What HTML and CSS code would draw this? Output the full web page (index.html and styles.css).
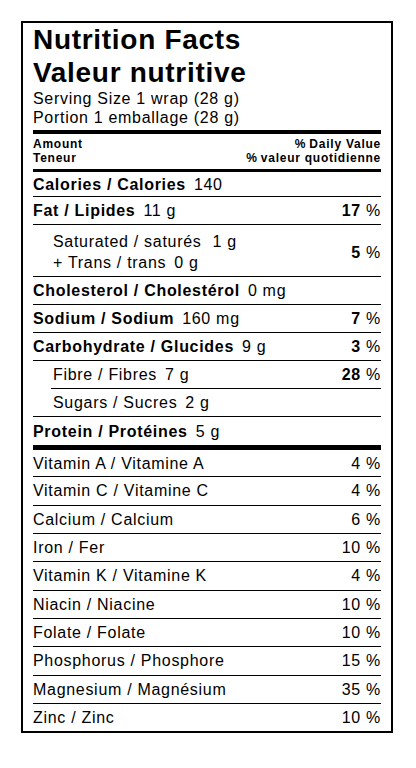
FILE: index.html
```html
<!DOCTYPE html>
<html lang="en">
<head>
    <meta charset="UTF-8">
    <meta name="viewport" content="width=device-width, initial-scale=1.0">
    <title>Nutrition Facts</title>
    <link rel="stylesheet" href="styles.css">
</head>
<body>
    <div class="label">
        <h1 class="title">Nutrition Facts<br>Valeur nutritive</h1>
        <div class="serving">
            Serving Size 1 wrap (28 g)<br>
            Portion 1 emballage (28 g)
        </div>
        <div class="head-row">
            <div>Amount<br>Teneur</div>
            <div class="right">%&thinsp;Daily Value<br>%&thinsp;valeur quotidienne</div>
        </div>

        <div class="row calories">
            <span><b>Calories / Calories</b><span class="amt">140</span></span>
        </div>
        <div class="row">
            <span><b>Fat / Lipides</b><span class="amt">11 g</span></span>
            <span class="dv"><b>17</b> %</span>
        </div>
        <div class="row double indent">
            <span>Saturated / saturés<span class="amt wide">1 g</span><br>+ Trans / trans<span class="amt">0 g</span></span>
            <span class="dv"><b>5</b> %</span>
        </div>
        <div class="row">
            <span><b>Cholesterol / Cholestérol</b><span class="amt">0 mg</span></span>
        </div>
        <div class="row">
            <span><b>Sodium / Sodium</b><span class="amt">160 mg</span></span>
            <span class="dv"><b>7</b> %</span>
        </div>
        <div class="row">
            <span><b>Carbohydrate / Glucides</b><span class="amt">9 g</span></span>
            <span class="dv"><b>3</b> %</span>
        </div>
        <div class="row sub">
            <span>Fibre / Fibres<span class="amt">7 g</span></span>
            <span class="dv"><b>28</b> %</span>
        </div>
        <div class="row indent">
            <span>Sugars / Sucres<span class="amt">2 g</span></span>
        </div>
        <div class="row protein">
            <span><b>Protein / Protéines</b><span class="amt">5 g</span></span>
        </div>

        <div class="row vit first">
            <span>Vitamin A / Vitamine A</span>
            <span class="dv">4 %</span>
        </div>
        <div class="row vit">
            <span>Vitamin C / Vitamine C</span>
            <span class="dv">4 %</span>
        </div>
        <div class="row vit">
            <span>Calcium / Calcium</span>
            <span class="dv">6 %</span>
        </div>
        <div class="row vit">
            <span>Iron / Fer</span>
            <span class="dv">10 %</span>
        </div>
        <div class="row vit">
            <span>Vitamin K / Vitamine K</span>
            <span class="dv">4 %</span>
        </div>
        <div class="row vit">
            <span>Niacin / Niacine</span>
            <span class="dv">10 %</span>
        </div>
        <div class="row vit">
            <span>Folate / Folate</span>
            <span class="dv">10 %</span>
        </div>
        <div class="row vit">
            <span>Phosphorus / Phosphore</span>
            <span class="dv">15 %</span>
        </div>
        <div class="row vit">
            <span>Magnesium / Magnésium</span>
            <span class="dv">35 %</span>
        </div>
        <div class="row vit last">
            <span>Zinc / Zinc</span>
            <span class="dv">10 %</span>
        </div>
    </div>
</body>
</html>
```

FILE: styles.css
```css
body {
    margin: 0;
    background-color: white;
    color: black;
    font-family: "Liberation Sans", Arial, sans-serif;
}
.label {
    margin: 21px 0 0 21px;
    width: 348px;
    border: 2px solid black;
    padding: 0 10px;
    font-size: 16px;
    letter-spacing: 0.7px;
}
.title {
    margin: 0;
    font-size: 28px;
    font-weight: bold;
    line-height: 33px;
    letter-spacing: 0.7px;
}
.serving {
    line-height: 19px;
    padding-bottom: 3px;
    border-bottom: 4px solid black;
}
.head-row {
    display: flex;
    justify-content: space-between;
    font-size: 12px;
    font-weight: bold;
    line-height: 13.5px;
    letter-spacing: 0.75px;
    padding: 4px 0 4px;
    border-bottom: 3px solid black;
}
.right {
    text-align: right;
}
.row {
    display: flex;
    justify-content: space-between;
    align-items: center;
    line-height: 19px;
    padding: 4px 0;
    border-bottom: 1px solid black;
}
.calories {
    padding: 3px 0 2px;
}
.double {
    line-height: 21px;
    padding: 6px 0 3px;
}
.indent {
    padding-left: 20px;
}
.sub {
    margin-left: 18px;
    padding-left: 2px;
}
.protein {
    padding: 5px 0 4px;
    border-bottom: 5px solid black;
}
.vit {
    line-height: 19.35px;
}
.vit.first {
    padding: 4px 0 3px;
}
.vit.last {
    border-bottom: none;
}
.amt {
    margin-left: 8px;
}
.amt.wide {
    margin-left: 11px;
}
.dv {
    text-align: right;
}
```
